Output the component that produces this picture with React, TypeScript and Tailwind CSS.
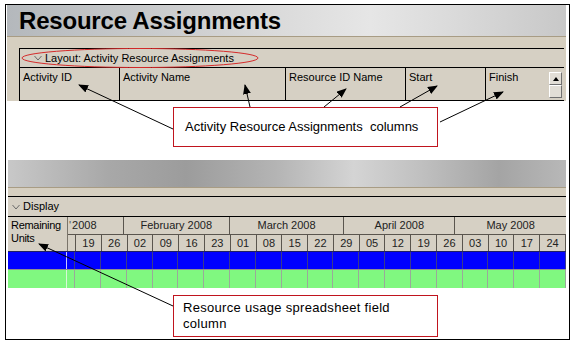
import React from "react";

const weeks = ["19", "26", "02", "09", "16", "23", "01", "08", "15", "22", "29", "05", "12", "19", "26", "03", "10", "17", "24"];

const months = [
    { label: "February 2008", w: "w-[106px]" },
    { label: "March 2008", w: "w-[115px]" },
    { label: "April 2008", w: "w-[111px]" },
    { label: "May 2008", w: "w-[111px]" }
];

const Chevron = () => (
    <svg width="8" height="6" viewBox="0 0 8 6" className="mr-[3px]">
        <path d="M0.5 1 L4 5 L7.5 1" fill="none" stroke="#6a6a6a" strokeWidth="1" />
    </svg>
);

const Arrows = () => (
    <svg className="absolute left-0 top-0 pointer-events-none" width="573" height="345" viewBox="0 0 573 345">
        <defs>
            <marker id="head" markerWidth="10" markerHeight="8" refX="9" refY="4" orient="auto" markerUnits="userSpaceOnUse">
                <path d="M0 0 L10 4 L0 8 Z" fill="#000" />
            </marker>
        </defs>
        <ellipse cx="140" cy="58" rx="118" ry="9.5" fill="none" stroke="#d42a2a" strokeWidth="1" />
        <g stroke="#000" strokeWidth="1" markerEnd="url(#head)">
            <line x1="173" y1="129" x2="79" y2="85" />
            <line x1="250" y1="107" x2="245" y2="85" />
            <line x1="324" y1="107" x2="346" y2="89" />
            <line x1="400" y1="107" x2="437" y2="86" />
            <line x1="440" y1="122" x2="503" y2="92" />
            <line x1="173" y1="306" x2="39" y2="244" />
        </g>
    </svg>
);

const App = () => {
    return (
        <div className="relative w-[573px] h-[345px] bg-white overflow-hidden font-['Liberation_Sans',Arial,sans-serif]">
            <div className="absolute left-[5px] top-[4px] w-[565px] h-[336px] border border-black" />
            <div className="pt-[5px] pl-[7px]">
                {/* top section */}
                <div className="w-[559px] h-[31px] flex items-center pl-[12px] bg-[linear-gradient(90deg,#b4b8bc_0%,#c4c6c8_20%,#d8d8d8_45%,#e6e6e6_65%,#dadada_80%,#c8c8c8_100%)]">
                    <span className="text-[24px] font-bold text-black leading-none tracking-[-0.2px]">Resource Assignments</span>
                </div>
                <div className="w-[559px] h-[65px] bg-[#d6cfc0] border-t border-[#a89c84] pl-[12px] pt-[11px]">
                    <div className="w-[545px] h-[53px] border-t border-l border-b border-black bg-[#d6d0c4] flex flex-col">
                        <div className="h-[18px] flex items-center pl-[14px] text-[11px] text-black">
                            <Chevron />
                            <span>Layout: Activity Resource Assignments</span>
                        </div>
                        <div className="flex-1 flex border-t border-black text-[11px] text-black">
                            <div className="w-[100px] border-r border-black pl-[3px] pt-[1px]">Activity ID</div>
                            <div className="w-[166px] border-r border-black pl-[3px] pt-[1px]">Activity Name</div>
                            <div className="w-[120px] border-r border-black pl-[3px] pt-[1px]">Resource ID Name</div>
                            <div className="w-[80px] border-r border-black pl-[3px] pt-[1px]">Start</div>
                            <div className="w-[63px] pl-[3px] pt-[1px]">Finish</div>
                            <div className="w-[13px] flex flex-col pt-[4px]">
                                <div className="h-[13px] bg-[#e2ded6] border border-t-white border-l-white border-r-[#707070] border-b-[#707070] flex items-center justify-center">
                                    <svg width="6" height="4" viewBox="0 0 6 4">
                                        <path d="M0 4 L3 0 L6 4 Z" fill="#000" />
                                    </svg>
                                </div>
                                <div className="h-[13px] bg-[#e2ded6] border border-t-white border-l-white border-r-[#707070] border-b-[#707070]" />
                            </div>
                        </div>
                    </div>
                </div>

                {/* callout 1 */}
                <div className="h-[59px] pt-[6px] pl-[166px]">
                    <div className="w-[265px] h-[40px] border border-[#c0141e] flex items-center pl-[11px] text-[13px] text-black whitespace-pre">
                        Activity Resource Assignments  columns
                    </div>
                </div>

                {/* bottom section */}
                <div className="ml-[1px] w-[558px]">
                    <div className="h-[27px] bg-[linear-gradient(90deg,#c8c8c8_0%,#a8a8a8_18%,#9c9c9c_32%,#b4b4b4_48%,#d4d4d4_62%,#c0c0c0_74%,#a4a4a4_88%,#b8b8b8_100%)]" />
                    <div className="h-[10px] bg-[#d6cfc0] border-t border-[#a89c84] border-b border-b-black" />
                    <div className="bg-[#d6d0c4]">
                        <div className="h-[20px] flex items-center pl-[4px] text-[11px] text-black border-b border-black">
                            <Chevron />
                            <span>Display</span>
                        </div>
                        <div className="flex h-[34px] text-[11px] text-[#222]">
                            <div className="w-[59px] pl-[3px] pt-[2px] leading-[13px] text-black tracking-[-0.3px] whitespace-nowrap">
                                <div>Remaining</div>
                                <div>Units</div>
                            </div>
                            <div className="w-[499px] flex flex-col border-l border-[#7a746a]">
                                <div className="h-[18px] flex border-b border-[#5a554e]">
                                    <div className="w-[56px] flex items-center pl-[1px] whitespace-nowrap border-r border-[#5a554e]">
                                        <span className="text-[#555]">'</span>
                                        <span className="ml-[1px]">2008</span>
                                    </div>
                                    {months.map((m) => (
                                        <div key={m.label} className={`${m.w} flex items-center justify-center whitespace-nowrap border-r border-[#5a554e] last:border-r-0`}>
                                            {m.label}
                                        </div>
                                    ))}
                                </div>
                                <div className="flex-1 grid grid-cols-[8px_repeat(19,1fr)]">
                                    <div className="border-r border-[#5a554e]" />
                                    {weeks.map((wk, i) => (
                                        <div key={i} className="flex items-center justify-center border-r border-[#5a554e]">
                                            {wk}
                                        </div>
                                    ))}
                                </div>
                            </div>
                        </div>
                    </div>
                    <div className="h-[18px] bg-[#0000ff] flex border-t border-[#202060]">
                        <div className="w-[59px] border-r border-[#c8c8ff]" />
                        <div className="flex-1 grid grid-cols-[8px_repeat(19,1fr)]">
                            <div className="border-r border-[#3a3a8a]" />
                            {weeks.map((wk, i) => (
                                <div key={i} className="border-r border-[#3a3a8a]" />
                            ))}
                        </div>
                    </div>
                    <div className="h-[19px] bg-[#80f880] flex border-t border-[#909090]">
                        <div className="w-[59px] border-r border-[#d8f8d8]" />
                        <div className="flex-1 grid grid-cols-[8px_repeat(19,1fr)]">
                            <div className="border-r border-[#9aa89a]" />
                            {weeks.map((wk, i) => (
                                <div key={i} className="border-r border-[#9aa89a]" />
                            ))}
                        </div>
                    </div>
                </div>

                {/* callout 2 */}
                <div className="pt-[7px] pl-[166px]">
                    <div className="w-[265px] h-[42px] border border-[#c0141e] flex flex-col justify-center pl-[9px] text-[13px] leading-[16px] text-black tracking-[0.3px]">
                        <span>Resource usage spreadsheet field</span>
                        <span>column</span>
                    </div>
                </div>
            </div>
            <Arrows />
        </div>
    );
};

export default App;
